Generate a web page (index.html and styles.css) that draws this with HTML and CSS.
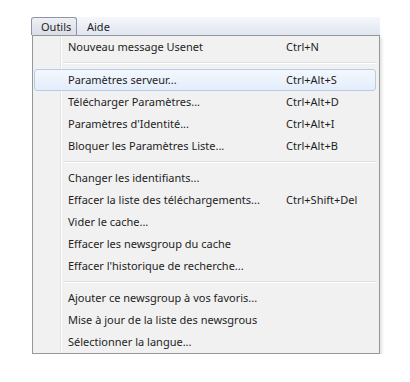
FILE: index.html
```html
<!DOCTYPE html>
<html lang="fr">
<head>
    <meta charset="UTF-8">
    <title>Menu Outils</title>
    <link rel="stylesheet" href="styles.css">
</head>
<body>

    <div class="menu-wrap">
        <div class="menubar">
            <div class="menubar-item open">Outils</div>
            <div class="menubar-item">Aide</div>
        </div>

        <div class="dropdown">
            <div class="item"><span class="label">Nouveau message Usenet</span><span class="key">Ctrl+N</span></div>
            <div class="sep"></div>
            <div class="item hover"><span class="label">Paramètres serveur...</span><span class="key">Ctrl+Alt+S</span></div>
            <div class="item"><span class="label">Télécharger Paramètres...</span><span class="key">Ctrl+Alt+D</span></div>
            <div class="item"><span class="label">Paramètres d'Identité...</span><span class="key">Ctrl+Alt+I</span></div>
            <div class="item"><span class="label">Bloquer les Paramètres Liste...</span><span class="key">Ctrl+Alt+B</span></div>
            <div class="sep"></div>
            <div class="item"><span class="label">Changer les identifiants...</span></div>
            <div class="item"><span class="label">Effacer la liste des téléchargements...</span><span class="key">Ctrl+Shift+Del</span></div>
            <div class="item"><span class="label">Vider le cache...</span></div>
            <div class="item"><span class="label">Effacer les newsgroup du cache</span></div>
            <div class="item"><span class="label">Effacer l'historique de recherche...</span></div>
            <div class="sep"></div>
            <div class="item"><span class="label">Ajouter ce newsgroup à vos favoris...</span></div>
            <div class="item"><span class="label">Mise à jour de la liste des newsgrous</span></div>
            <div class="item"><span class="label">Sélectionner la langue...</span></div>
        </div>
    </div>

</body>
</html>
```

FILE: styles.css
```css
body {
    margin: 0;
    background-color: #fff;
    font-family: "Noto Sans", "Open Sans", sans-serif;
    font-size: 11px;
    color: #1e1e1e;
}

.menu-wrap {
    padding: 17px 0 0 31px;
    width: 349px;
}

.menubar {
    display: flex;
    height: 18px;
    background: linear-gradient(#f6f7fc, #dfe5f2);
}

.menubar-item {
    padding: 0 6px 0 9px;
    line-height: 17px;
    border: 1px solid transparent;
    border-bottom: none;
}

.menubar-item.open {
    width: 29px;
    background: linear-gradient(#eef0f5, #d9dde6);
    border-color: #8e96a6;
    border-radius: 3px 3px 0 0;
}

.dropdown {
    margin-left: 1px;
    width: 346px;
    border: 1px solid #979797;
    background: linear-gradient(to right, #f1f1f1 27px, #e2e3e3 27px, #e2e3e3 28px, #fff 28px, #fff 29px, #f1f1f1 29px);
    box-shadow: 2px 2px 3px rgba(0, 0, 0, 0.12);
}

.item {
    display: flex;
    height: 22px;
    line-height: 22px;
    padding-left: 35px;
}

.item .label {
    width: 218px;
    white-space: nowrap;
}

.item.hover {
    margin: 1px 3px 0 1px;
    height: 20px;
    line-height: 20px;
    padding-left: 33px;
    border: 1px solid #b6cdea;
    border-radius: 3px;
    background: linear-gradient(#f4f8fd, #e3edfa);
}

.sep {
    height: 10px;
    margin-left: 30px;
    margin-right: 2px;
    background: linear-gradient(transparent 4px, #e0e0e0 4px, #e0e0e0 5px, #fff 5px, #fff 6px, transparent 6px);
}
```
